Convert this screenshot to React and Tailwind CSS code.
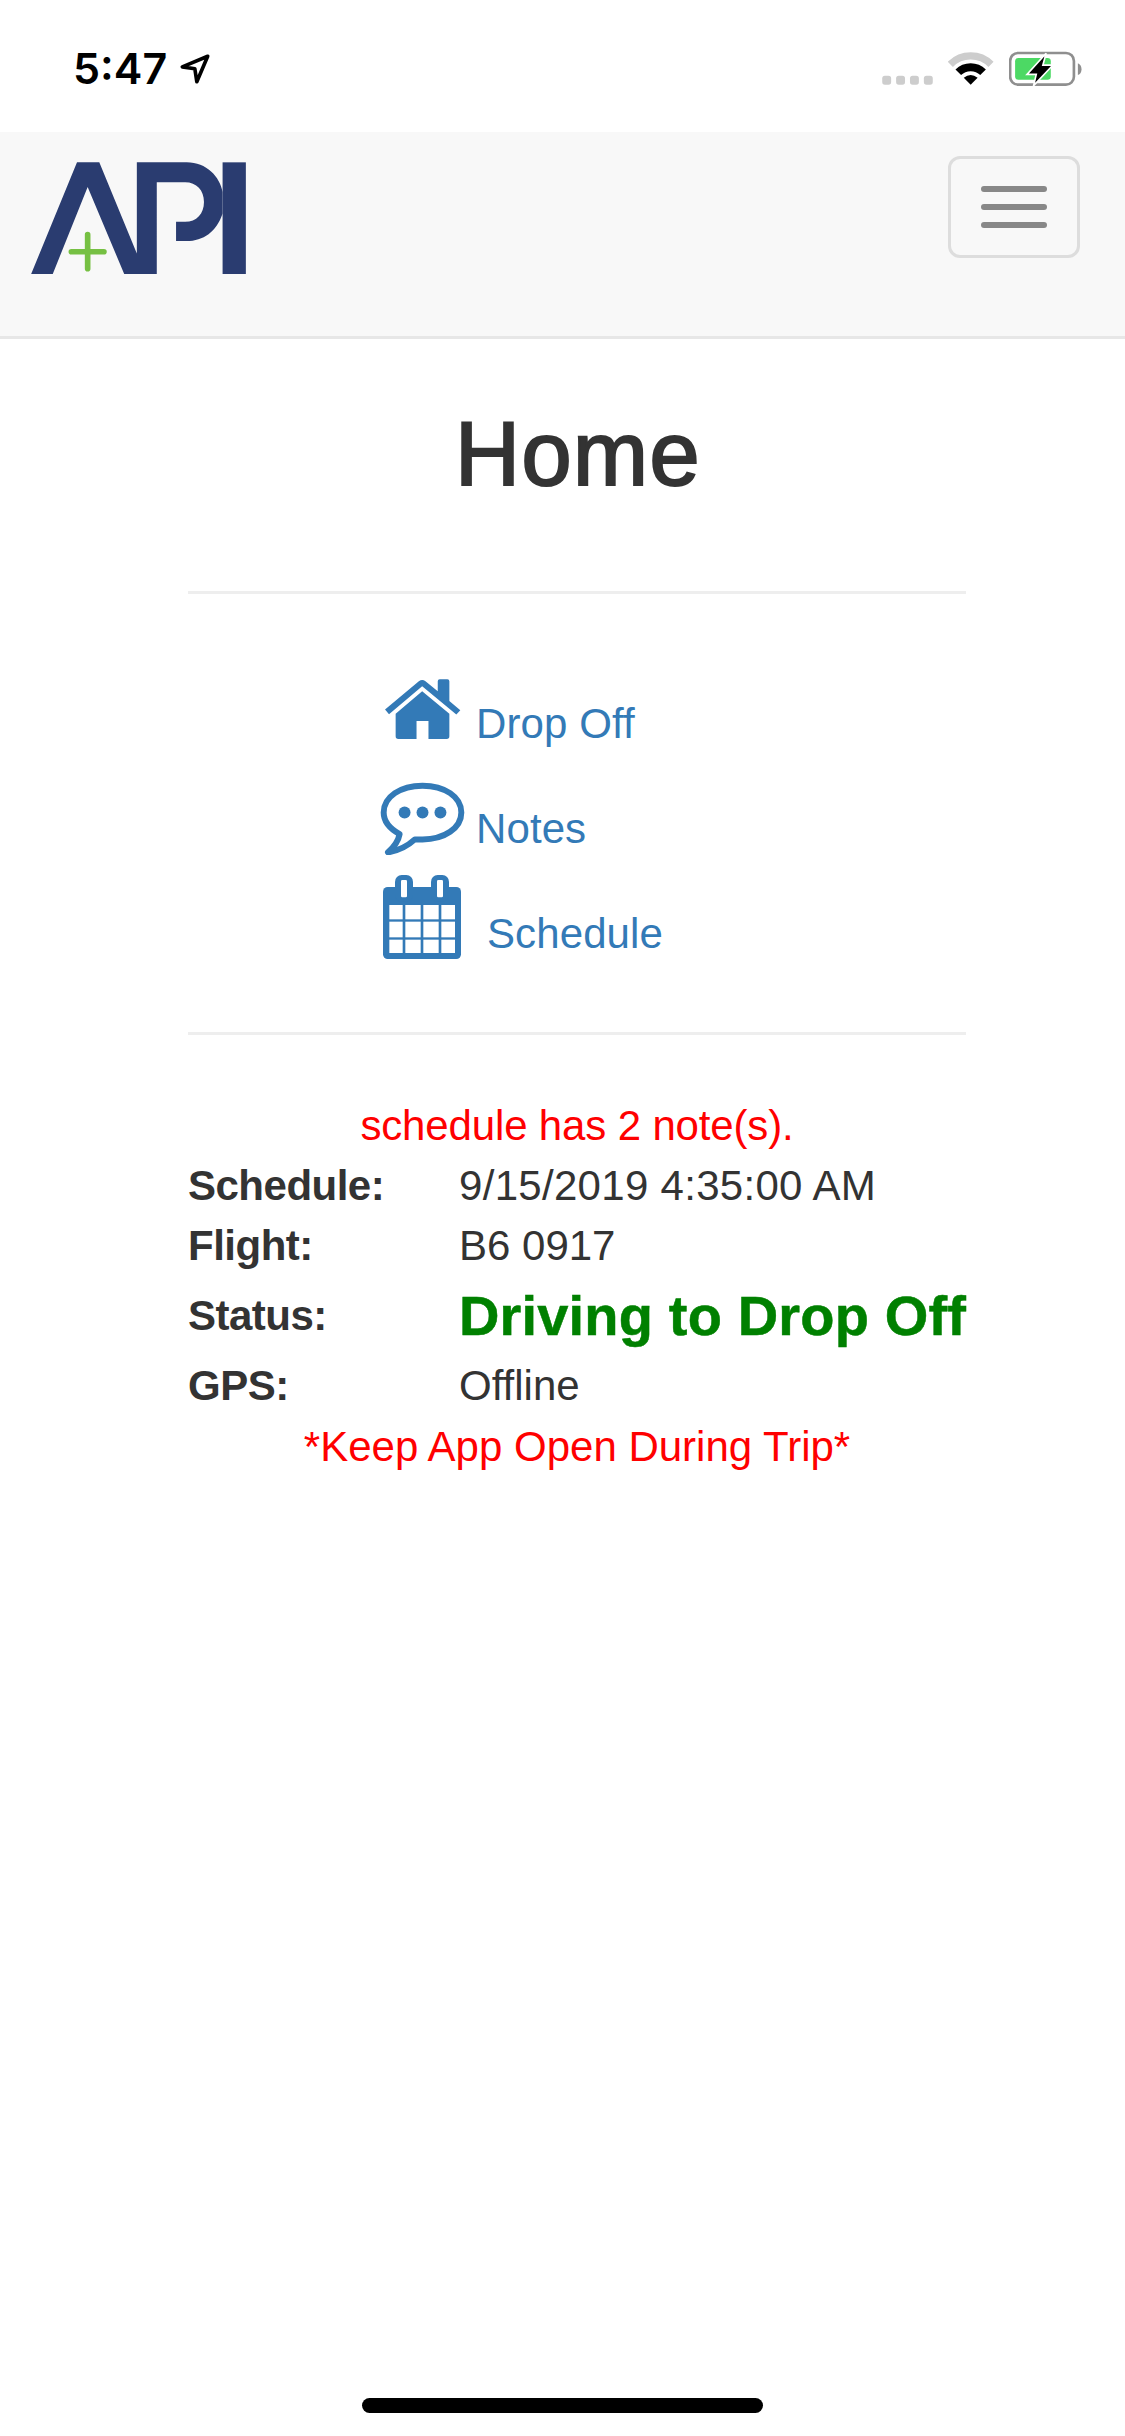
const font = { fontFamily: '"Liberation Sans", Arial, sans-serif' };

function LocationArrow() {
  return (
    <svg viewBox="535 155 100 100" className="w-[33px] h-[33px] shrink-0">
      <path d="M622 168 L545 200 L583 206 L589 245 Z" fill="none" stroke="#000" strokeWidth="11" strokeLinejoin="round" />
    </svg>
  );
}

function Signal() {
  return (
    <svg viewBox="171 150 153 112" className="w-[51px] h-[37px] shrink-0">
      {[171, 213, 255, 297].map((x) => (
        <rect key={x} x={x} y="228" width="27" height="27" rx="8" fill="#cdcdcd" />
      ))}
    </svg>
  );
}

function Wifi() {
  return (
    <svg viewBox="369 150 138 112" className="w-[46px] h-[37px] shrink-0">
      <path d="M375.5 193.5 A87 87 0 0 1 498.5 193.5" fill="none" stroke="#cdcdcd" strokeWidth="22" />
      <path d="M399.5 217.5 A53 53 0 0 1 474.5 217.5" fill="none" stroke="#000" strokeWidth="24" />
      <path d="M437 255 L416 234 Q437 218 458 234 Z" fill="#000" />
    </svg>
  );
}

function Battery() {
  return (
    <svg viewBox="552 150 220 112" className="w-[73px] h-[37px] shrink-0">
      <rect x="555" y="159" width="193" height="96" rx="24" fill="none" stroke="#8f8f8f" strokeWidth="8" />
      <path d="M760 190 Q771 195 771 208 Q771 221 760 226 Z" fill="#8f8f8f" />
      <rect x="570" y="174" width="108" height="66" rx="10" fill="#4cd964" />
      <path d="M664 160 L606 224 L634 224 L626 258 L684 196 L654 196 Z" fill="#000" stroke="#fff" strokeWidth="5" />
    </svg>
  );
}

function Logo() {
  return (
    <svg viewBox="90 485 650 340" className="w-[217px] h-[113px] shrink-0">
      <path
        d="M92 822 L230 486 H297 L410 760 V486 H560 C620 486 660 530 668 575 V640 C650 695 610 723 560 723 H528 V665 H555 C590 665 612 640 612 605 C612 570 590 546 555 546 H470 V822 H372 L262 560 L157 822 Z"
        fill="#2a3c70"
      />
      <rect x="668" y="486" width="70" height="336" fill="#2a3c70" />
      <path d="M213 755 H311 M262 703 V806" stroke="#76c043" strokeWidth="17" strokeLinecap="round" fill="none" />
    </svg>
  );
}

function HomeIcon() {
  return (
    <svg viewBox="100 80 235 190" className="w-[78px] h-[63px] shrink-0" fill="#337ab7">
      <path d="M103 175 L205 90 Q215 82 225 90 L262 120 V90 Q262 84 268 84 H291 Q297 84 297 90 V149 L330 177 L318 190 L215 105 L115 189 Z" />
      <path d="M215 120 L297 188 V256 Q297 264 289 264 H234 V210 H198 V264 H143 Q135 264 135 256 V188 Z" />
    </svg>
  );
}

function NotesIcon() {
  return (
    <svg viewBox="88 396 256 220" className="w-[85px] h-[73px] shrink-0">
      <path
        d="M216 407 C150 407 99 440 99 488 C99 515 118 537 147 553 C143 575 130 592 112 608 C145 603 170 590 193 569 C200 569 208 569 216 569 C282 569 333 535 333 488 C333 440 282 407 216 407 Z"
        fill="none"
        stroke="#337ab7"
        strokeWidth="18"
        strokeLinejoin="round"
      />
      <circle cx="162" cy="488" r="18" fill="#337ab7" />
      <circle cx="216" cy="488" r="18" fill="#337ab7" />
      <circle cx="270" cy="488" r="18" fill="#337ab7" />
    </svg>
  );
}

function CalendarIcon() {
  const xs = [[118, 40], [166, 46], [220, 46], [274, 41]];
  const ys = [[768, 43], [818, 47], [872, 40]];
  return (
    <svg viewBox="99 678 234 252" className="w-[78px] h-[84px] shrink-0">
      <rect x="99" y="714" width="234" height="216" rx="14" fill="#337ab7" />
      <rect x="135" y="678" width="54" height="80" rx="20" fill="#337ab7" />
      <rect x="243" y="678" width="54" height="80" rx="20" fill="#337ab7" />
      <rect x="153" y="693" width="18" height="52" rx="4" fill="#fff" />
      <rect x="261" y="693" width="18" height="52" rx="4" fill="#fff" />
      {ys.map(([y, h]) =>
        xs.map(([x, w]) => <rect key={`${x}-${y}`} x={x} y={y} width={w} height={h} fill="#fff" />)
      )}
    </svg>
  );
}

function Row({ label, children, className }) {
  return (
    <div className={`flex items-center ${className}`}>
      <div className="w-[271px] font-bold shrink-0 tracking-[-0.5px]">{label}</div>
      <div className="whitespace-nowrap">{children}</div>
    </div>
  );
}

export default function App() {
  return (
    <div style={font} className="min-h-[2436px] bg-white flex flex-col text-[42px] leading-[60px] text-[#333]">
      <div className="h-[132px] flex items-start justify-between pl-[73px] pr-[43px]">
        <div className="flex items-center gap-[12px] pt-[42px]">
          <span className="text-[43px] leading-[52px] font-semibold text-black" style={{ fontFamily: 'Inter, sans-serif' }}>
            5:47
          </span>
          <LocationArrow />
        </div>
        <div className="flex items-start gap-[15px] pt-[50px]">
          <Signal />
          <Wifi />
          <Battery />
        </div>
      </div>

      <nav className="h-[207px] bg-[#f8f8f8] border-b-[3px] border-[#e7e7e7] flex items-start justify-between pl-[30px] pr-[45px]">
        <div className="pt-[30px]">
          <Logo />
        </div>
        <button className="mt-[24px] w-[132px] h-[102px] border-[3px] border-[#dddddd] rounded-[12px] flex flex-col items-center justify-center gap-[12px]">
          <span className="block w-[66px] h-[6px] rounded-[3px] bg-[#888888]" />
          <span className="block w-[66px] h-[6px] rounded-[3px] bg-[#888888]" />
          <span className="block w-[66px] h-[6px] rounded-[3px] bg-[#888888]" />
        </button>
      </nav>

      <main className="w-[778px] ml-[188px]">
        <h1 className="text-[90px] leading-[99px] font-medium text-center pt-[66px] pl-[2px] tracking-[1.5px] [-webkit-text-stroke:2.2px_#333333]">Home</h1>
        <hr className="mt-[87px] border-t-[3px] border-[#eeeeee]" />

        <div className="pt-[84px] pl-[192px] text-[#337ab7]">
          <div className="flex items-start mb-[28px]">
            <div className="w-[96px] pl-[4px]"><HomeIcon /></div>
            <span className="mt-[16px] tracking-[0.1px]">Drop Off</span>
          </div>
          <div className="flex items-start mb-[16px]">
            <div className="w-[96px]"><NotesIcon /></div>
            <span className="mt-[17px] tracking-[0.1px]">Notes</span>
          </div>
          <div className="flex items-start">
            <div className="w-[107px] pl-[3px]"><CalendarIcon /></div>
            <span className="mt-[29px] tracking-[0.1px]">Schedule</span>
          </div>
        </div>

        <hr className="mt-[68px] border-t-[3px] border-[#eeeeee]" />

        <div className="pt-[61px]">
          <div className="text-center text-[#ff0000] tracking-[-0.15px]">schedule has 2 note(s).</div>
          <Row label="Schedule:" className="h-[60px]"><span className="tracking-[0.3px]">9/15/2019 4:35:00 AM</span></Row>
          <Row label="Flight:" className="h-[60px]">B6 0917</Row>
          <Row label="Status:" className="h-[80px]">
            <span className="block text-[56px] leading-[80px] font-bold text-[#008000] tracking-[0.17px] [-webkit-text-stroke:0.5px_#008000]">Driving to Drop Off</span>
          </Row>
          <Row label="GPS:" className="h-[60px]">Offline</Row>
          <div className="mt-[1px] text-center text-[#ff0000]">*Keep App Open During Trip*</div>
        </div>
      </main>

      <div className="mt-auto pb-[23px] flex justify-center">
        <div className="w-[401px] h-[15px] rounded-full bg-black" />
      </div>
    </div>
  );
}
